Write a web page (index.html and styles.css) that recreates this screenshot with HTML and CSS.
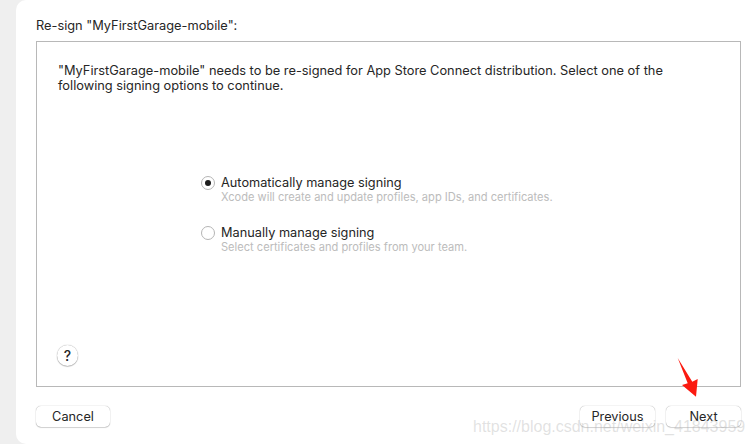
FILE: index.html
```html
<!DOCTYPE html>
<html lang="en">
<head>
<meta charset="utf-8">
<title>Re-sign</title>
<link rel="stylesheet" href="styles.css">
</head>
<body>
<main class="sheet">
  <h1 class="title">Re-sign "MyFirstGarage-mobile":</h1>
  <section class="panel">
    <p class="intro">"MyFirstGarage-mobile" needs to be re-signed for App Store Connect distribution. Select one of the following signing options to continue.</p>
    <div class="options">
      <div class="option">
        <span class="radio radio-on"></span>
        <div class="option-text">
          <div class="option-name">Automatically manage signing</div>
          <div class="option-desc">Xcode will create and update profiles, app IDs, and certificates.</div>
        </div>
      </div>
      <div class="option">
        <span class="radio"></span>
        <div class="option-text">
          <div class="option-name">Manually manage signing</div>
          <div class="option-desc">Select certificates and profiles from your team.</div>
        </div>
      </div>
    </div>
    <button class="help" type="button">?</button>
  </section>
  <footer class="actions">
    <button class="btn btn-cancel" type="button">Cancel</button>
    <div class="actions-right">
      <button class="btn" type="button">Previous</button>
      <button class="btn" type="button">Next</button>
    </div>
  </footer>
</main>
<svg class="arrow" width="24" height="42" viewBox="0 0 24 42" aria-hidden="true"><polygon points="0.7,1 15.3,24.7 20.7,22 19,39.7 5,28 10.7,26.3" fill="#fb1a10"/></svg>
<div class="watermark">https://blog.csdn.net/weixin_41843959</div>
</body>
</html>
```
FILE: styles.css
```css
* { box-sizing: border-box; }
html, body { margin: 0; height: 444px; overflow: hidden; }
body {
  background: #efefef;
  padding-left: 16px;
  font-family: Inter, "Liberation Sans", sans-serif;
  color: #262626;
  position: relative;
}
.sheet {
  height: 444px;
  background: #fff;
  border-radius: 10px 0 0 10px;
  padding: 17px 13px 0 20px;
  display: flex;
  flex-direction: column;
}
.title {
  margin: 0;
  font-size: 12.8px;
  font-weight: 400;
  line-height: 17px;
  height: 24px;
}
.panel {
  height: 346px;
  border: 1px solid #b8b8b8;
  padding: 21px 60px 0 21px;
  position: relative;
  display: flex;
  flex-direction: column;
}
.intro {
  margin: 0;
  font-size: 12.8px;
  line-height: 15px;
}
.options {
  margin: 81px 0 0 143px;
  display: flex;
  flex-direction: column;
  gap: 20px;
}
.option { display: flex; gap: 6px; align-items: flex-start; }
.radio {
  width: 14px;
  height: 14px;
  margin-top: 2px;
  border: 1px solid #b5b5b5;
  border-radius: 50%;
  background: #fff;
  display: flex;
  align-items: center;
  justify-content: center;
  flex: none;
}
.radio-on::after {
  content: "";
  width: 6px;
  height: 6px;
  border-radius: 50%;
  background: #1c1c1c;
}
.option-name { font-size: 12.75px; line-height: 18px; }
.option-desc { font-size: 11.1px; line-height: 14px; margin-top: -2px; color: #bcbcbc; white-space: nowrap; }
.help {
  position: absolute;
  left: 20px;
  bottom: 20px;
  width: 21px;
  height: 21px;
  padding: 0;
  border: 0;
  border-radius: 50%;
  background: #fff;
  box-shadow: 0 0 1px rgba(0,0,0,.45), 0 1px 1px rgba(0,0,0,.2);
  font: 500 14px/21px Inter, "Liberation Sans", sans-serif;
  color: #262626;
}
.actions {
  display: flex;
  justify-content: space-between;
  margin-top: 19px;
}
.actions-right { display: flex; gap: 11px; }
.btn {
  width: 75px;
  height: 21px;
  padding: 0;
  border: 0;
  border-radius: 5px;
  background: #fff;
  box-shadow: 0 0 1px rgba(0,0,0,.45), 0 1px 1px rgba(0,0,0,.15);
  font: 400 12.75px/21px Inter, "Liberation Sans", sans-serif;
  color: #262626;
}
.btn-cancel { width: 74px; }
.arrow { position: absolute; left: 677px; top: 357px; }
.watermark {
  position: absolute;
  left: 473px;
  top: 417px;
  font: 400 16px/20px "Liberation Sans", sans-serif;
  color: rgba(170,170,170,.35);
  white-space: nowrap;
}
```
